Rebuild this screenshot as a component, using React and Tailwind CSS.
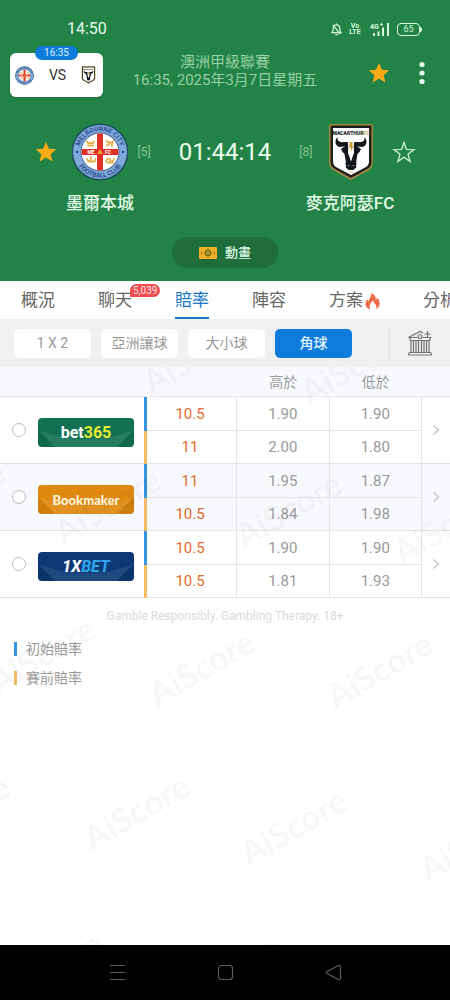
import { useState } from 'react';

const TABS = [
  { id: 'overview', label: '概況' },
  { id: 'chat', label: '聊天', badge: '5,039' },
  { id: 'odds', label: '賠率' },
  { id: 'lineup', label: '陣容' },
  { id: 'tips', label: '方案', hot: true },
  { id: 'analysis', label: '分析' },
];

const MARKETS = ['1 X 2', '亞洲讓球', '大小球', '角球'];

const BOOKMAKERS = [
  { id: 'bet365', open: ['10.5', '1.90', '1.90'], pre: ['11', '2.00', '1.80'] },
  { id: 'Bookmaker', open: ['11', '1.95', '1.87'], pre: ['10.5', '1.84', '1.98'] },
  { id: '1XBET', open: ['10.5', '1.90', '1.90'], pre: ['10.5', '1.81', '1.93'] },
];

// Centre points of the repeated watermark, relative to the odds panel
const WATERMARKS = [
  [195, -12], [353, -2], [-48, 131], [107, 138], [288, 142], [446, 158],
  [42, 287], [201, 300], [379, 302], [-44, 445], [136, 444], [293, 459],
  [472, 475], [48, 602], [226, 606],
];

const STAR = 'M12 1l3.2 7.4 8 .7-6.1 5.3 1.9 7.9L12 18.1l-7 4.2 1.9-7.9L.8 9.1l8-.7z';

const Star = ({ filled, className }) => (
  <svg viewBox="0 0 24 24" className={className}>
    <path
      d={filled ? STAR : 'M12 2.5l2.4 6.9 7.6.2-6 4.6 2.1 7.3-6.1-4.3-6.1 4.3L8 14.2 2 9.6l7.6-.2z'}
      fill={filled ? '#fbab15' : 'none'}
      stroke={filled ? 'none' : '#c3f0cd'}
      strokeWidth="1.4"
    />
  </svg>
);

const CityCrest = ({ className }) => (
  <svg viewBox="0 0 58 58" className={className} role="img" aria-label="墨爾本城">
    <defs>
      <path id="ringTop" d="M8 29a21 21 0 0 1 42 0" />
      <path id="ringBottom" d="M3.5 29a25.5 25.5 0 0 0 51 0" />
      <clipPath id="inner"><circle cx="29" cy="29" r="18.5" /></clipPath>
    </defs>
    <circle cx="29" cy="29" r="28.5" fill="#1c4f5c" />
    <circle cx="29" cy="29" r="27" fill="#7fa9d8" />
    <circle cx="29" cy="29" r="19.5" fill="#4f6f9f" />
    <circle cx="29" cy="29" r="18.5" fill="#fff" />
    <g clipPath="url(#inner)" fill="#dd3027">
      <path d="M26 10h6v38h-6zM10 26h38v6H10z" />
    </g>
    <g fill="none" stroke="#e3b04b" strokeWidth="1.8" strokeLinecap="round">
      <path d="M16 18.500l1 1.500h5l1-1.500M17 22.500h5M35.500 18l2 1.500h4l1-1.500M36 22.500l2-1.500M41 21v2" />
      <path d="M16 36l1.500 2.500h6l1-2.500M20 34v3M35 38c1-3 3-3 4-1s3 2 4-1M36 39.500h6" />
    </g>
    <path d="M26 31l3-5 3 5z" fill="#e6a335" />
    <g fontFamily="Roboto, sans-serif" fontWeight="700" fill="#2c4e92" textAnchor="middle">
      <text fontSize="6.5"><textPath href="#ringTop" startOffset="50%">MELBOURNE CITY</textPath></text>
      <text fontSize="6.5"><textPath href="#ringBottom" startOffset="50%">FOOTBALL CLUB</textPath></text>
      <text x="20" y="31" fontSize="5" fill="#fff">ME</text>
      <text x="37" y="31" fontSize="5" fill="#fff">FC</text>
    </g>
    <circle cx="6" cy="29" r="1.3" fill="#2c4e92" />
    <circle cx="52" cy="29" r="1.3" fill="#2c4e92" />
  </svg>
);

const MacarthurCrest = ({ className }) => (
  <svg viewBox="0 0 46 58" className={className} role="img" aria-label="麥克阿瑟FC">
    <path d="M3 1h40q2 0 2 2v36q0 5-4 8L23 57 5 47q-4-3-4-8V3q0-2 2-2z" fill="#a4893f" />
    <path d="M3.500 2.500h39q1 0 1 1V39q0 4-3.500 6.500L23 55 6 45.500Q2.500 43 2.500 39V3.500q0-1 1-1z" fill="#20201d" />
    <path d="M5 5h36v33q0 4-3 6L23 52 8 44q-3-2-3-6z" fill="#fff" />
    <text x="23" y="12" fontFamily="Roboto, sans-serif" fontWeight="900" fontSize="5" textAnchor="middle" fill="#222">
      MACARTHUR<tspan fill="#c1a24a">FC</tspan>
    </text>
    <g fill="#14171c">
      <path d="M9.500 14c-3 3-3 9 2.500 10l8-1v-3.500c-2-1-4 0-7-.5-3-.4-4-2.500-3.500-5z" />
      <path d="M36.500 14c3 3 3 9-2.500 10l-8-1v-3.500c2-1 4 0 7-.5 3-.4 4-2.500 3.500-5z" />
      <path d="M13 26l7-5 3 18-5 1-1.500-9q-2.500-2-3.500-5z" />
      <path d="M33 26l-7-5-3 18 5 1 1.500-9q2.500-2 3.500-5z" />
      <path d="M17.500 39.500q5.500-2.500 11 0l-.5 5-2.500 2.500h-5L18 44.500z" />
    </g>
    <path d="M23 38l-3-8 .5-9h5l.5 9z" fill="#fff" />
    <path d="M21.500 19h3v4h1l-3 6 .5-4h-1.500z" fill="#c99c30" />
    <path d="M19.500 42.500h2M24.500 42.500h2" stroke="#888" strokeWidth="1" />
    <path d="M21 49h4" stroke="#d5c48c" strokeWidth="1" />
  </svg>
);

const StatusBar = () => (
  <div className="flex h-[46px] items-center justify-between pt-3 pr-7 pl-[67px]">
    <span className="text-base leading-5 text-[#e2fbe6]">14:50</span>
    <div className="flex items-center text-[#d8f8dd]">
      <svg viewBox="0 0 12 14" className="h-[13px] w-[11px]" fill="none" stroke="currentColor" strokeWidth="1.4">
        <path d="M1 10.500h10c-1.300-1-1.500-2-1.500-4.500 0-2.500-1.500-4-3.500-4S2.500 3.500 2.500 6c0 2.500-.2 3.500-1.500 4.500zM4.500 12.500h3M6 2V.5M2 2l8 10" />
      </svg>
      <div className="ml-2 flex w-[10px] flex-col items-center text-[7px] leading-[6px] font-bold">
        <span>Vo</span>
        <span>LTE</span>
      </div>
      <svg viewBox="0 0 22 14" className="ml-[9px] h-[14px] w-[22px]" fill="currentColor">
        <text x="1" y="6.5" fontSize="7" fontWeight="700" fontFamily="Roboto, sans-serif">4G</text>
        <path d="M4 11h2v3H4zM8.500 9.500h2V14h-2zM13 5.500h2V14h-2zM18 1h2v13h-2zM12 1h1v3h-1zM11 2h3v1h-3z" />
      </svg>
      <div className="ml-[6px] flex items-center">
        <span className="flex h-[13px] w-[23px] items-center justify-center rounded-[4px] border border-current text-[9px] leading-none">65</span>
        <span className="h-[5px] w-[2px] rounded-r bg-current" />
      </div>
    </div>
  </div>
);

const MatchHeader = () => (
  <header className="bg-[#238347] pb-[13px]">
    <StatusBar />
    <div className="grid grid-cols-[1fr_auto_1fr] items-start px-[10px] pt-[7px]">
      <div className="relative flex h-11 w-[93px] items-center justify-between rounded-md bg-white px-[5px] shadow">
        <span className="absolute inset-x-0 -top-[7px] mx-auto h-[14px] w-[43px] rounded-full bg-[#0f7cdb] text-center text-[10px] leading-[14px] text-[#d9f1ff]">
          16:35
        </span>
        <CityCrest className="size-[19px]" />
        <span className="text-sm text-[#333]">VS</span>
        <MacarthurCrest className="mr-[2px] h-[18px] w-[15px]" />
      </div>
      <div className="text-center text-[15px] leading-[18px] text-[#95cfa4]">
        <div>澳洲甲級聯賽</div>
        <div>16:35, 2025年3月7日星期五</div>
      </div>
      <div className="flex h-10 items-center justify-end gap-[14px]">
        <button type="button" aria-label="收藏賽事">
          <Star filled className="size-[22px]" />
        </button>
        <button type="button" aria-label="更多" className="px-[15px]">
          <svg viewBox="0 0 6 24" className="h-6 w-[6px]" fill="#e6fbe9">
            <circle cx="3" cy="3.5" r="2.6" />
            <circle cx="3" cy="12" r="2.6" />
            <circle cx="3" cy="20.5" r="2.6" />
          </svg>
        </button>
      </div>
    </div>

    <div className="flex items-center justify-center pt-[26px]">
      <div className="flex flex-1 items-center justify-end pr-[28px]">
        <button type="button" aria-label="收藏墨爾本城" className="mr-[14px]">
          <Star filled className="size-[22px]" />
        </button>
        <CityCrest className="mr-[9px] size-[58px]" />
        <span className="text-xs text-[#86c496]">[5]</span>
      </div>
      <span className="text-2xl leading-8 text-[#eafdec]">01:44:14</span>
      <div className="flex flex-1 items-center pl-[28px]">
        <span className="text-xs text-[#86c496]">[8]</span>
        <MacarthurCrest className="ml-4 h-[58px] w-[46px]" />
        <button type="button" aria-label="收藏麥克阿瑟FC" className="ml-[18px]">
          <Star className="size-6" />
        </button>
      </div>
    </div>
    <div className="flex justify-between px-[50px] pt-[10px] text-[17px] leading-6 font-medium text-[#e2fbe6]">
      <span className="w-[100px] text-center">墨爾本城</span>
      <span className="w-[100px] text-center">麥克阿瑟FC</span>
    </div>
    <button
      type="button"
      className="mx-auto mt-[22px] flex h-[31px] w-[106px] items-center justify-center gap-2 rounded-full bg-[#1e6d3b] text-[13px] font-medium text-[#dffbe4]"
    >
      <svg viewBox="0 0 18 12" className="h-3 w-[18px]">
        <rect width="18" height="12" rx="1" fill="#f2b02a" />
        <circle cx="9" cy="6" r="2.6" fill="none" stroke="#5d6a22" strokeWidth="1.4" />
        <path d="M8.500 1.500h1v2h-1zM8.500 8.500h1v2h-1zM8 5.500h2v1H8zM2 4.500L3.500 6 2 7.500zM16 4.500L14.500 6 16 7.500z" fill="#5d6a22" />
      </svg>
      動畫
    </button>
  </header>
);

const Flame = () => (
  <svg viewBox="0 0 15 17" className="ml-[2px] h-[17px] w-[15px]">
    <path d="M6 0c5 2 5 5 4.500 7 1-.5 1.500-1.500 1.500-2.500C14 6.500 15 9 14.500 11.500c-.3 2-1.500 3.700-3.500 4.700 1-2.200.5-4-1-5.500C9 9.700 8.500 9 8.300 7.500 5.500 9.500 4 12 5 16.300 2 15.300.5 13.500.5 11 .5 9 1.500 7.500 2.500 6c0 1.500.5 2 1 2.500C4 5 7 4 6 0z" fill="#ee6a47" />
  </svg>
);

const TabBar = ({ active, onChange }) => (
  <nav className="flex h-[38px] gap-[43px] overflow-hidden bg-white pl-[21px] text-[17px] whitespace-nowrap">
    {TABS.map((tab) => (
      <button
        key={tab.id}
        type="button"
        onClick={() => onChange(tab.id)}
        className={`relative flex shrink-0 items-center border-b-2 pt-1 ${
          active === tab.id ? 'border-b-[#1a77c4] text-[#1a77c4]' : 'border-b-transparent text-[#666]'
        }`}
      >
        {tab.label}
        {tab.hot && <Flame />}
        {tab.badge && (
          <span className="absolute top-[3px] left-8 rounded-full rounded-bl-none bg-[#ee4c50] px-[3px] text-[10px] leading-[13px] text-[#ffe3e3]">
            {tab.badge}
          </span>
        )}
      </button>
    ))}
  </nav>
);

const BankIcon = () => (
  <svg viewBox="0 0 26 26" className="size-[26px]" fill="none" stroke="#737373" strokeWidth="1.2">
    <path d="M1 25h24M2.500 22.500h21M1 25l1.500-2.500M25 25l-1.500-2.500" />
    <path d="M3 10.500h20M3 7.500v3M23 7.500v3M1.500 7.500L13 1.500l3 1.500M1.500 7.500H10M16 7.500h8.500" />
    <path d="M4 10.500v12M6.500 10.500v12M9 10.500v12M11.500 10.500v12M14.500 10.500v12M17 10.500v12M19.500 10.500v12M22 10.500v12" />
    <circle cx="13" cy="6.5" r="2" />
    <path d="M20.500 1v6M17.500 4h6" />
  </svg>
);

const MarketBar = ({ active, onChange }) => (
  <div className="flex h-12 items-center bg-[#f0f0f0] pr-[17px] pl-[14px]">
    <div className="flex flex-1 gap-[10px]">
      {MARKETS.map((market) => (
        <button
          key={market}
          type="button"
          onClick={() => onChange(market)}
          className={`h-[29px] w-[77px] rounded-[5px] text-sm ${
            active === market ? 'bg-[#0f7cdb] font-medium text-[#e0f4ff]' : 'bg-white text-[#999]'
          }`}
        >
          {market}
        </button>
      ))}
    </div>
    <span className="mr-[17px] h-9 w-px bg-[#e2e2e2]" />
    <button type="button" aria-label="博彩公司">
      <BankIcon />
    </button>
  </div>
);

const LOGO_STYLES = {
  bet365: 'bg-[#137153] text-base font-bold text-white',
  Bookmaker: 'bg-[#e0890f] font-[Lato,sans-serif] text-[13px] font-black text-[#fff6de]',
  '1XBET': 'bg-[#0d3876] text-base font-extrabold italic text-white',
};

const BookmakerLogo = ({ id }) => (
  <span className={`relative flex h-[29px] w-24 items-center justify-center overflow-hidden rounded-[4px] ${LOGO_STYLES[id]}`}>
    <svg viewBox="0 0 96 29" className="absolute inset-0 size-full">
      <path d="M0 12l17 17H0zM96 12L79 29h17z" fill="#000" opacity="0.08" />
      <path d="M0 12q48 18 96 0L79 29H17z" fill="#fff" opacity="0.08" />
    </svg>
    <span className="relative pt-[2px]">
      {id === 'bet365' && <>bet<span className="text-[#e8ea2c]">365</span></>}
      {id === 'Bookmaker' && id}
      {id === '1XBET' && <>1X<span className="text-[#2fa4ea]">BET</span></>}
    </span>
  </span>
);

const OddsCells = ({ values }) => (
  <>
    <td className="border-r border-b border-[#e5e5e7] pr-[3px] text-[#df6c2c]">{values[0]}</td>
    <td className="border-r border-b border-[#e5e5e7]">{values[1]}</td>
    <td className="border-r border-b border-[#e5e5e7]">{values[2]}</td>
  </>
);

const OddsTable = ({ selected, onSelect }) => (
  <table className="w-full table-fixed border-separate border-spacing-0 text-center text-[15px] leading-5 text-[#999]">
    <colgroup>
      <col className="w-36" />
      <col className="w-[3px]" />
      <col className="w-1/5" />
      <col />
      <col />
      <col className="w-7" />
    </colgroup>
    <thead className="bg-[#f8f9fd]">
      <tr className="h-[30px] text-sm">
        <th className="border-b border-[#e6e8ee]" />
        <th className="border-b border-[#e6e8ee]" />
        <th className="border-b border-[#e6e8ee]" />
        <th className="border-b border-[#e6e8ee] font-normal">高於</th>
        <th className="border-b border-[#e6e8ee] font-normal">低於</th>
        <th className="border-b border-[#e6e8ee]" />
      </tr>
    </thead>
    {BOOKMAKERS.map((item, index) => (
      <tbody key={item.id} className={index % 2 ? 'bg-[#f8f9fd]' : 'bg-white'}>
        <tr className="h-[34px]">
          <td rowSpan={2} className="border-b border-[#e2e2e4] p-0">
            <label className="flex items-center gap-3 pt-1 pl-3">
              <input
                type="radio"
                name="bookmaker"
                aria-label={item.id}
                checked={selected === item.id}
                onChange={() => onSelect(item.id)}
                className="mb-1 size-[14px] appearance-none rounded-full border border-[#bdbdbd] bg-white checked:border-4 checked:border-[#0f7cdb]"
              />
              <BookmakerLogo id={item.id} />
            </label>
          </td>
          <td className="bg-[#3695e0] p-0" />
          <OddsCells values={item.open} />
          <td rowSpan={2} className="border-b border-[#e2e2e4] p-0">
            <button type="button" aria-label={`${item.id} 詳情`} className="block w-full">
              <svg viewBox="0 0 8 12" className="mx-auto h-3 w-2" fill="none" stroke="#c9c9c9" strokeWidth="1.5">
                <path d="M1.500 1.500L6.500 6l-5 4.500" />
              </svg>
            </button>
          </td>
        </tr>
        <tr className="h-[33px]">
          <td className="bg-[#f3bd66] p-0" />
          <OddsCells values={item.pre} />
        </tr>
      </tbody>
    ))}
  </table>
);

const Watermark = () => (
  <div aria-hidden="true" className="pointer-events-none absolute inset-0 overflow-hidden">
    {WATERMARKS.map(([x, y]) => (
      <span
        key={`${x},${y}`}
        className="absolute -translate-x-1/2 -translate-y-1/2 -rotate-[30deg] font-[Lato,sans-serif] text-[34px] leading-none font-bold text-black/4"
        style={{ left: x, top: y }}
      >
        AiScore
      </span>
    ))}
  </div>
);

const SystemNav = () => (
  <nav className="flex h-[55px] items-center justify-center gap-[91px] bg-black text-[#5c5c5c]">
    <button type="button" aria-label="最近">
      <svg viewBox="0 0 17 17" className="size-[17px]" fill="none" stroke="currentColor" strokeWidth="1.2">
        <path d="M1 1.500h15M1 8.500h15M1 15.500h15" />
      </svg>
    </button>
    <button type="button" aria-label="主頁">
      <svg viewBox="0 0 17 17" className="size-[17px]" fill="none" stroke="currentColor" strokeWidth="1.2">
        <rect x="1.5" y="1.5" width="14" height="14" rx="3" />
      </svg>
    </button>
    <button type="button" aria-label="返回">
      <svg viewBox="0 0 17 17" className="size-[17px]" fill="none" stroke="currentColor" strokeWidth="1.2" strokeLinejoin="round">
        <path d="M1.500 7.800q-.8.700 0 1.400L13 15.300q2.500.8 2.500-1V2.700q0-1.800-2.500-1z" />
      </svg>
    </button>
  </nav>
);

export default function App() {
  const [tab, setTab] = useState('odds');
  const [market, setMarket] = useState('角球');
  const [selected, setSelected] = useState(null);

  return (
    <div className='flex min-h-screen flex-col bg-white font-[Roboto,"Noto_Sans_CJK_TC",sans-serif]'>
      <MatchHeader />
      <TabBar active={tab} onChange={setTab} />
      <MarketBar active={market} onChange={setMarket} />
      <main className="relative flex-1">
        <OddsTable selected={selected} onSelect={setSelected} />
        <p className="pt-[9px] text-center text-xs leading-[18px] text-[#dadada]">
          Gamble Responsibly. Gambling Therapy. 18+
        </p>
        <ul className="mt-[9px] px-[14px] text-sm text-[#999]">
          <li className="flex h-[29px] items-center gap-[9px]">
            <span className="h-[14px] w-[3px] bg-[#3695e0]" />
            初始賠率
          </li>
          <li className="flex h-[29px] items-center gap-[9px]">
            <span className="h-[14px] w-[3px] bg-[#f3bd66]" />
            賽前賠率
          </li>
        </ul>
        <Watermark />
      </main>
      <SystemNav />
    </div>
  );
}
